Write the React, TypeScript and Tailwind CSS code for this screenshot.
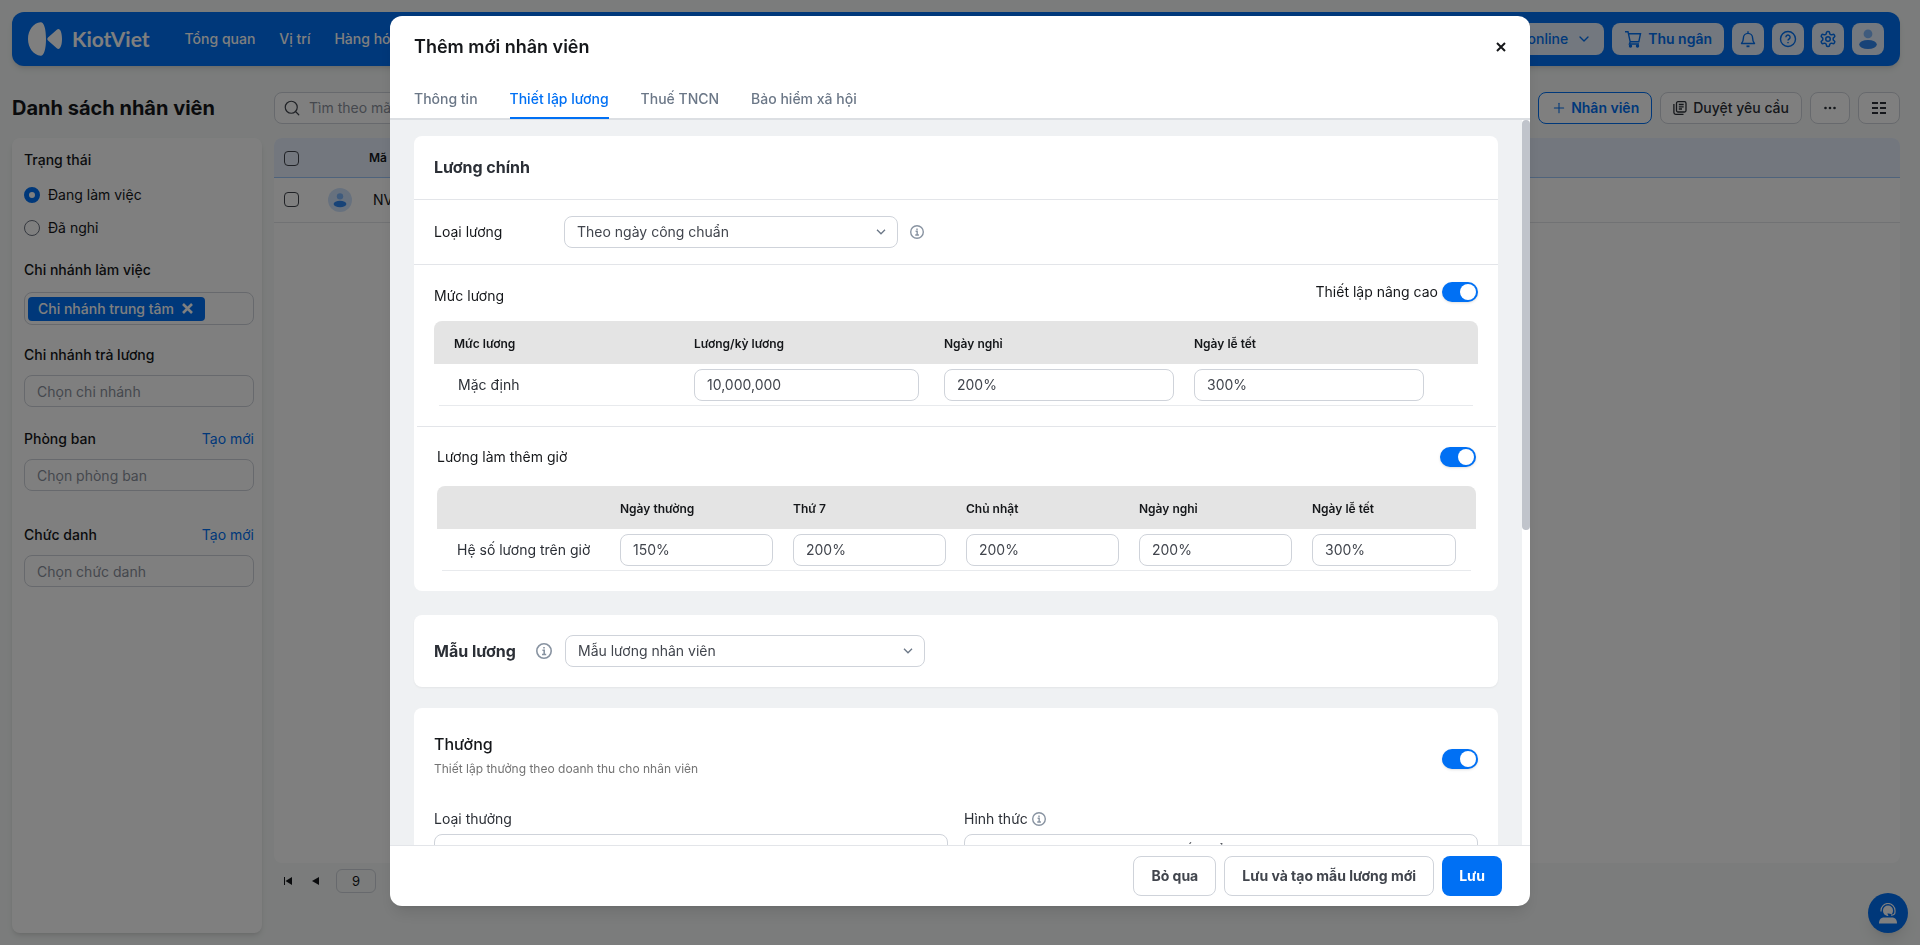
import React from 'react';
import { Search, ChevronDown, Plus } from 'lucide-react';

const fieldClass =
  'rounded-lg border border-[#cfd3da] bg-white px-3 text-sm text-[#41454d] outline-none placeholder:text-[#8b919c]';

const InfoIcon: React.FC<{ size?: number }> = ({ size = 14 }) => (
  <svg width={size} height={size} viewBox="0 0 16 16" fill="none" stroke="#8893a1" strokeWidth="1.6">
    <circle cx="8" cy="8" r="7.2" />
    <path d="M6.4 7.2H8.2V11.4M6 11.5H10.2M8 4V5.6" />
  </svg>
);

const UserIcon: React.FC<{ size: number }> = ({ size }) => (
  <svg width={size} height={size} viewBox="0 0 24 24">
    <circle cx="12" cy="6.5" r="4.8" fill="#7fb6fb" />
    <ellipse cx="12" cy="18" rx="9.6" ry="5" fill="#2f86f0" />
  </svg>
);

const Toggle: React.FC<{ label: string; text?: string }> = ({ label, text }) => (
  <label className="flex cursor-pointer items-center gap-1 text-sm text-[#15171a]">
    {text}
    <input type="checkbox" role="switch" aria-label={label} defaultChecked className="peer sr-only" />
    <span className="flex h-5 w-9 items-center justify-end rounded-full bg-[#0070f4] px-0.5 shadow-sm">
      <span className="size-4 rounded-full bg-white" />
    </span>
  </label>
);

interface SelectBoxProps {
  id: string;
  value: string;
  className: string;
  large?: boolean;
}

const SelectBox: React.FC<SelectBoxProps> = ({ id, value, className, large }) => (
  <div className={`relative flex items-center ${className}`}>
    <select id={id} className={`${fieldClass} w-full appearance-none ${large ? 'h-[34px]' : 'h-8'}`}>
      <option>{value}</option>
    </select>
    <svg width="10" height="6" viewBox="0 0 10 6" fill="none" stroke="#6b7787" strokeWidth="1.3" className="pointer-events-none absolute right-3">
      <path d="M1 .8 5 4.8 9 .8" />
    </svg>
  </div>
);

const Header: React.FC = () => {
  const square = 'flex size-8 items-center justify-center rounded-lg bg-[#e6f1fe] text-[#0070f4]';
  return (
    <header className="flex h-[54px] items-center rounded-xl bg-[#0070f4] px-4 shadow-md">
      <a href="#" className="flex items-center gap-2.5 text-white">
        <svg width="34" height="34" viewBox="0 0 34 34" fill="currentColor">
          <path d="M12.6.3C16 0 18 7 18 17s-2 17-5.4 16.7C5.5 33.2 0 25.8 0 17S5.5.8 12.6.3Z" />
          <path d="M20 15.6 28.8 7.7C31.8 5.4 34 10 34 17s-2.2 11.6-5.2 9.3L20 18.4c-.9-.8-.9-2 0-2.8Z" />
        </svg>
        <span className="font-[Lato] text-[21px] font-bold">KiotViet</span>
      </a>
      <nav className="ml-[35px] flex gap-6 text-sm font-medium text-white">
        <a href="#">Tổng quan</a>
        <a href="#">Vị trí</a>
        <a href="#">Hàng hóa</a>
      </nav>
      <div className="ml-auto flex gap-2">
        <button className="flex h-8 items-center gap-2 rounded-lg bg-[#e6f1fe] px-3 text-sm font-medium text-[#0070f4]">
          Bán online <ChevronDown size={16} />
        </button>
        <button className="flex h-8 items-center gap-1.5 rounded-lg bg-[#e6f1fe] px-3 text-sm font-semibold text-[#0070f4]">
          <svg width="18" height="18" viewBox="0 0 18 18" fill="none" stroke="currentColor" strokeWidth="1.4">
            <path d="M1 1.7H4L6.2 11.8H14.8L16.5 3.7H4.4M6.2 11.8 5.4 14H15" />
            <circle cx="6.5" cy="16" r="1" fill="currentColor" />
            <circle cx="13.5" cy="16" r="1" fill="currentColor" />
          </svg>
          Thu ngân
        </button>
        <button className={square} aria-label="Thông báo">
          <svg width="16" height="18" viewBox="0 0 16 18" fill="none" stroke="currentColor" strokeWidth="1.4">
            <path d="M8 1.2V3M3.4 8a4.6 4.6 0 0 1 9.2 0c0 3.2.8 4.3 1.9 5.5H1.5C2.6 12.3 3.4 11.2 3.4 8Z" strokeLinejoin="round" />
            <path d="M6.5 16.3H9.5" strokeWidth="1.8" />
          </svg>
        </button>
        <button className={square} aria-label="Trợ giúp">
          <svg width="18" height="18" viewBox="0 0 18 18" fill="none" stroke="currentColor" strokeWidth="1.4">
            <circle cx="9" cy="9" r="7.5" />
            <path d="M6.9 7.2a2.1 2.1 0 1 1 3.3 1.7C9.4 9.5 9 9.8 9 10.6M9 11.9V13.3" />
          </svg>
        </button>
        <button className={square} aria-label="Thiết lập">
          <svg width="18" height="18" viewBox="0 0 24 24" fill="none" stroke="currentColor" strokeWidth="2">
            <path d="M12.22 2h-.44a2 2 0 0 0-2 2v.18a2 2 0 0 1-1 1.73l-.43.25a2 2 0 0 1-2 0l-.15-.08a2 2 0 0 0-2.73.73l-.22.38a2 2 0 0 0 .73 2.73l.15.1a2 2 0 0 1 1 1.72v.51a2 2 0 0 1-1 1.74l-.15.09a2 2 0 0 0-.73 2.73l.22.38a2 2 0 0 0 2.73.73l.15-.08a2 2 0 0 1 2 0l.43.25a2 2 0 0 1 1 1.73V20a2 2 0 0 0 2 2h.44a2 2 0 0 0 2-2v-.18a2 2 0 0 1 1-1.73l.43-.25a2 2 0 0 1 2 0l.15.08a2 2 0 0 0 2.73-.73l.22-.39a2 2 0 0 0-.73-2.73l-.15-.08a2 2 0 0 1-1-1.74v-.5a2 2 0 0 1 1-1.74l.15-.09a2 2 0 0 0 .73-2.73l-.22-.38a2 2 0 0 0-2.73-.73l-.15.08a2 2 0 0 1-2 0l-.43-.25a2 2 0 0 1-1-1.73V4a2 2 0 0 0-2-2z" />
            <circle cx="12" cy="12" r="3" />
          </svg>
        </button>
        <button className={square} aria-label="Tài khoản">
          <UserIcon size={22} />
        </button>
      </div>
    </header>
  );
};

const Toolbar: React.FC = () => {
  const outline = 'flex h-8 items-center rounded-lg border border-[#cfd3da] bg-white text-sm text-[#2b2f36]';
  return (
    <div className="mt-[26px] flex items-center">
      <h1 className="w-[262px] text-xl font-bold leading-8 text-[#15171a]">Danh sách nhân viên</h1>
      <label className="flex h-8 w-[360px] items-center gap-2 rounded-lg border border-[#cfd3da] bg-white px-2">
        <Search size={18} strokeWidth={1.6} className="shrink-0 text-[#41454d]" />
        <input placeholder="Tìm theo mã, tên nhân viên" className="w-full text-sm outline-none placeholder:text-[#8b919c]" />
      </label>
      <div className="ml-auto flex gap-2">
        <button className="flex h-8 items-center gap-1 rounded-lg border border-[#0070f4] bg-white px-3 text-sm font-semibold text-[#0070f4]">
          <Plus size={16} strokeWidth={1.6} /> Nhân viên
        </button>
        <button className={`${outline} gap-1.5 px-3 font-medium`}>
          <svg width="14" height="14" viewBox="0 0 14 14" fill="none" stroke="currentColor" strokeWidth="1.3">
            <rect x="3.5" y=".7" width="9.5" height="10.3" rx="1.5" />
            <path d="M5.8 3.5H10.7M5.8 5.8H10.7M5.8 8H9M.9 3V11.5A1.8 1.8 0 0 0 2.7 13.3H10.5" />
          </svg>
          Duyệt yêu cầu
        </button>
        <button className={`${outline} w-10 justify-center`} aria-label="Thêm">
          <svg width="12" height="4" viewBox="0 0 12 4" fill="currentColor">
            <circle cx="1.5" cy="2" r="1.3" />
            <circle cx="6" cy="2" r="1.3" />
            <circle cx="10.5" cy="2" r="1.3" />
          </svg>
        </button>
        <button className={`${outline} w-[42px] justify-center`} aria-label="Cột hiển thị">
          <svg width="14" height="12" viewBox="0 0 14 12" stroke="currentColor" strokeWidth="2">
            <path d="M0 1H6M8 1H14M0 6H6M8 6H14M0 11H6M8 11H14" />
          </svg>
        </button>
      </div>
    </div>
  );
};

const FilterField: React.FC<{ id: string; label: string; placeholder: string; action?: boolean }> = ({
  id,
  label,
  placeholder,
  action,
}) => (
  <div className="flex flex-col gap-2.5">
    <div className="flex justify-between text-sm">
      <label htmlFor={id} className="font-medium">{label}</label>
      {action && <a href="#" className="text-[#0070f4]">Tạo mới</a>}
    </div>
    <input id={id} placeholder={placeholder} className={`${fieldClass} h-8 w-full`} />
  </div>
);

const radioClass =
  'size-4 appearance-none rounded-full border border-[#6b7280] checked:border-[5px] checked:border-[#0070f4]';

const Sidebar: React.FC = () => (
  <aside className="w-[250px] shrink-0 rounded-lg bg-white pl-3 pr-2 pt-3 text-sm text-[#15171a] shadow-md">
    <fieldset>
      <legend className="font-medium">Trạng thái</legend>
      <label className="mt-[15px] flex items-center gap-2">
        <input type="radio" name="status" defaultChecked className={radioClass} />
        Đang làm việc
      </label>
      <label className="mt-[13px] flex items-center gap-2">
        <input type="radio" name="status" className={radioClass} />
        Đã nghỉ
      </label>
    </fieldset>
    <div className="mt-[22px] font-medium">Chi nhánh làm việc</div>
    <div className="mt-3 flex h-[33px] items-center rounded-lg border border-[#cfd3da] px-[3px]">
      <span className="flex h-6 items-center gap-2 rounded bg-[#0070f4] pl-2.5 pr-3 font-medium text-white">
        Chi nhánh trung tâm
        <button aria-label="Xóa">
          <svg width="11" height="11" viewBox="0 0 11 11" stroke="currentColor" strokeWidth="2.6"><path d="M1 1 10 10M10 1 1 10" /></svg>
        </button>
      </span>
    </div>
    <div className="mt-5">
      <FilterField id="pay-branch" label="Chi nhánh trả lương" placeholder="Chọn chi nhánh" />
    </div>
    <div className="mt-[22px]">
      <FilterField id="department" label="Phòng ban" placeholder="Chọn phòng ban" action />
    </div>
    <div className="mt-[34px]">
      <FilterField id="title" label="Chức danh" placeholder="Chọn chức danh" action />
    </div>
  </aside>
);

const Check: React.FC<{ label: string }> = ({ label }) => (
  <input type="checkbox" aria-label={label} className="block size-[15px] appearance-none rounded border border-[#41454d]" />
);

const EmployeeTable: React.FC = () => (
  <main className="flex min-w-0 flex-1 flex-col">
    <div className="h-[725px] overflow-hidden rounded-lg bg-white">
      <table className="w-full table-fixed text-left text-sm text-[#15171a]">
        <thead>
          <tr className="h-[39px] border-b border-[#9cc6f8] bg-[#e6effd] text-xs">
            <th className="w-11 pl-2.5 pt-0.5"><Check label="Chọn tất cả" /></th>
            <th className="w-[51px]" />
            <th className="pt-0.5 font-semibold">Mã nhân viên</th>
          </tr>
        </thead>
        <tbody>
          <tr className="h-[45px] border-b border-[#e3e5e9]">
            <td className="pl-2.5"><Check label="Chọn NV000001" /></td>
            <td className="pl-2.5">
              <span className="flex size-6 items-center justify-center rounded-full bg-[#cfe3fc]">
                <UserIcon size={16} />
              </span>
            </td>
            <td className="pl-1">NV000001</td>
          </tr>
        </tbody>
      </table>
    </div>
    <div className="mt-1.5 flex h-6 items-center pl-2.5 text-[#15171a]">
      <button aria-label="Trang đầu">
        <svg width="8" height="8" viewBox="0 0 8 8" fill="currentColor"><path d="M0 0H1V8H0ZM8 0V8L1.5 4Z" /></svg>
      </button>
      <button aria-label="Trang trước" className="ml-5">
        <svg width="7" height="8" viewBox="0 0 7 8" fill="currentColor"><path d="M7 0V8L0 4Z" /></svg>
      </button>
      <input aria-label="Trang" defaultValue="9" className="ml-[17px] h-6 w-10 rounded-md border border-[#cfd3da] text-center text-[13px]" />
    </div>
  </main>
);

const cellInput = `${fieldClass} block h-8 w-full`;
const headCell = 'bg-[#e4e4e4] pl-5 pt-0.5 font-semibold';

const SalaryTable: React.FC = () => (
  <>
    <table className="w-full table-fixed text-left">
      <thead>
        <tr className="h-[43px] text-xs text-[#15171a]">
          <th className={`${headCell} w-60 rounded-tl-lg`}>Mức lương</th>
          <th className={`${headCell} w-[250px]`}>Lương/kỳ lương</th>
          <th className={`${headCell} w-[250px]`}>Ngày nghỉ</th>
          <th className={`${headCell} rounded-tr-lg`}>Ngày lễ tết</th>
        </tr>
      </thead>
      <tbody>
        <tr className="h-[41px] text-sm text-[#2b2f36]">
          <td className="pl-6">Mặc định</td>
          <td className="pl-5 pr-[5px]"><input aria-label="Lương/kỳ lương" defaultValue="10,000,000" className={cellInput} /></td>
          <td className="pl-5"><input aria-label="Ngày nghỉ" defaultValue="200%" className={cellInput} /></td>
          <td className="pl-5 pr-[54px]"><input aria-label="Ngày lễ tết" defaultValue="300%" className={cellInput} /></td>
        </tr>
      </tbody>
    </table>
    <div className="mx-[5px] h-px bg-[#e8eaed]" />
  </>
);

const overtime = [
  { day: 'Ngày thường', rate: '150%' },
  { day: 'Thứ 7', rate: '200%' },
  { day: 'Chủ nhật', rate: '200%' },
  { day: 'Ngày nghỉ', rate: '200%' },
  { day: 'Ngày lễ tết', rate: '300%' },
];

const OvertimeTable: React.FC = () => (
  <>
    <table className="w-full table-fixed text-left">
      <thead>
        <tr className="h-[43px] text-xs text-[#15171a]">
          <th className={`${headCell} w-[163px] rounded-tl-lg`} />
          {overtime.map((item) => (
            <th key={item.day} className={`${headCell} w-[173px] last:w-auto last:rounded-tr-lg`}>
              {item.day}
            </th>
          ))}
        </tr>
      </thead>
      <tbody>
        <tr className="h-[41px] text-sm text-[#2b2f36]">
          <td className="whitespace-nowrap pl-5">Hệ số lương trên giờ</td>
          {overtime.map((item) => (
            <td key={item.day} className="pl-5 last:pr-5">
              <input aria-label={item.day} defaultValue={item.rate} className={cellInput} />
            </td>
          ))}
        </tr>
      </tbody>
    </table>
    <div className="mx-[5px] h-px bg-[#e8eaed]" />
  </>
);

const EmployeeModal: React.FC = () => {
  const tabs = ['Thông tin', 'Thiết lập lương', 'Thuế TNCN', 'Bảo hiểm xã hội'];
  const secondary = 'h-10 rounded-lg border border-[#cfd3da] bg-white px-[17px] text-[#41454d]';

  return (
    <div role="dialog" aria-label="Thêm mới nhân viên" className="flex h-[890px] w-[1140px] flex-col overflow-hidden rounded-xl bg-white shadow-lg">
      <div className="flex h-[60px] items-center justify-between px-6 pt-0.5">
        <h2 className="text-lg font-semibold text-[#15171a]">Thêm mới nhân viên</h2>
        <button aria-label="Đóng" className="text-[#15171a]">
          <svg width="10" height="10" viewBox="0 0 10 10" stroke="currentColor" strokeWidth="2"><path d="M1 1 9 9M9 1 1 9" /></svg>
        </button>
      </div>
      <div className="flex h-11 shrink-0 gap-8 border-b-2 border-[#dcdfe3] px-6 text-sm font-medium text-[#6b7787]">
        {tabs.map((tab) => (
          <button
            key={tab}
            className={tab === 'Thiết lập lương' ? '-mb-px h-[43px] border-b-2 border-[#0070f4] pt-[5px] text-[#0070f4]' : 'h-[42px] pt-1'}
          >
            {tab}
          </button>
        ))}
      </div>

      <div className="flex min-h-0 flex-1">
        <div className="flex-1 overflow-hidden bg-[#eff1f3] px-6 pt-4">
          <section className="rounded-lg bg-white pb-5">
            <h3 className="h-[63px] px-5 text-base font-bold leading-[62px] text-[#2b2f36]">Lương chính</h3>
            <div className="flex h-[66px] items-center border-y border-[#e3e5e9] px-5">
              <label htmlFor="salary-type" className="w-[130px] text-sm text-[#15171a]">Loại lương</label>
              <SelectBox id="salary-type" value="Theo ngày công chuẩn" className="mr-3 w-[334px]" />
              <InfoIcon />
            </div>
            <div className="px-5 pb-5">
              <div className="flex h-14 justify-between pt-[17px]">
                <span className="pt-1 text-sm text-[#15171a]">Mức lương</span>
                <div>
                  <Toggle label="Thiết lập nâng cao" text="Thiết lập nâng cao" />
                </div>
              </div>
              <SalaryTable />
            </div>
            <div className="ml-[3px] mr-0.5 border-t border-[#e3e5e9] px-5">
              <div className="flex h-[59px] items-center justify-between">
                <span className="text-sm text-[#15171a]">Lương làm thêm giờ</span>
                <Toggle label="Lương làm thêm giờ" />
              </div>
              <OvertimeTable />
            </div>
          </section>

          <section className="mt-6 flex h-[72px] items-center rounded-lg bg-white px-5 shadow-xs">
            <label htmlFor="template" className="w-[102px] text-base font-bold text-[#2b2f36]">Mẫu lương</label>
            <InfoIcon size={16} />
            <SelectBox id="template" value="Mẫu lương nhân viên" className="ml-[13px] w-[360px]" />
          </section>

          <section className="mt-[21px] rounded-lg bg-white px-5 pb-8 pt-6">
            <div className="flex items-center justify-between">
              <div className="pb-2">
                <h3 className="text-base font-medium text-[#15171a]">Thưởng</h3>
                <p className="mt-1 text-xs leading-[18px] text-[#737373]">Thiết lập thưởng theo doanh thu cho nhân viên</p>
              </div>
              <Toggle label="Thưởng" />
            </div>
            <div className="mt-[23px] grid grid-cols-2 gap-4">
              <div>
                <label htmlFor="bonus-type" className="flex h-[25px] text-sm text-[#2b2f36]">Loại thưởng</label>
                <SelectBox id="bonus-type" value="Theo doanh thu cá nhân" className="w-full" large />
              </div>
              <div>
                <div className="flex h-[25px] items-start gap-1 text-sm text-[#2b2f36]">
                  <label htmlFor="bonus-form">Hình thức</label>
                  <span className="pt-[3px]"><InfoIcon /></span>
                </div>
                <SelectBox id="bonus-form" value="Tính theo mức vượt doanh thu tối thiểu" className="w-full" large />
              </div>
            </div>
          </section>
        </div>
        {/* scroll track */}
        <div className="w-2 bg-white">
          <div className="h-[410px] rounded-full bg-[#c0c4cb]" />
        </div>
      </div>

      <div className="flex h-[61px] shrink-0 items-center justify-end gap-2 border-t border-[#e3e5e9] px-7 text-sm font-bold">
        <button className={secondary}>Bỏ qua</button>
        <button className={secondary}>Lưu và tạo mẫu lương mới</button>
        <button className="h-10 rounded-lg bg-[#0070f4] px-[17px] text-white">Lưu</button>
      </div>
    </div>
  );
};

const App: React.FC = () => (
  <div className="min-h-screen bg-[#f6f9f8] font-[Inter,sans-serif]">
    <div className="flex min-h-screen flex-col pb-3 pl-3 pr-5 pt-3">
      <Header />
      <Toolbar />
      <div className="mt-3.5 flex flex-1 gap-3">
        <Sidebar />
        <EmployeeTable />
      </div>
    </div>

    <button aria-label="Hỗ trợ" className="fixed bottom-3 right-3 flex size-10 items-center justify-center rounded-full bg-[#0070f4] text-white shadow-lg">
      <svg width="20" height="21" viewBox="0 0 20 21" fill="none" stroke="currentColor">
        <path d="M3 8.5V7.5a7 7 0 0 1 14 0V9c0 2-1.5 3.2-4 3.2" strokeWidth="1.2" />
        <path d="M5 7.5a5 5 0 0 1 10 0c0 2-.6 3-1.5 3.8-1.5-1-3-1-4.2-.8L10.5 13C7 13 5 10.5 5 7.5Z" fill="currentColor" stroke="none" />
        <path d="M1 20.5c0-4 2-6 5-6h8c3 0 5 2 5 6Z" fill="currentColor" stroke="none" />
      </svg>
    </button>

    <div className="fixed inset-0 flex items-start justify-center bg-black/50 pt-4">
      <EmployeeModal />
    </div>
  </div>
);

export default App;
